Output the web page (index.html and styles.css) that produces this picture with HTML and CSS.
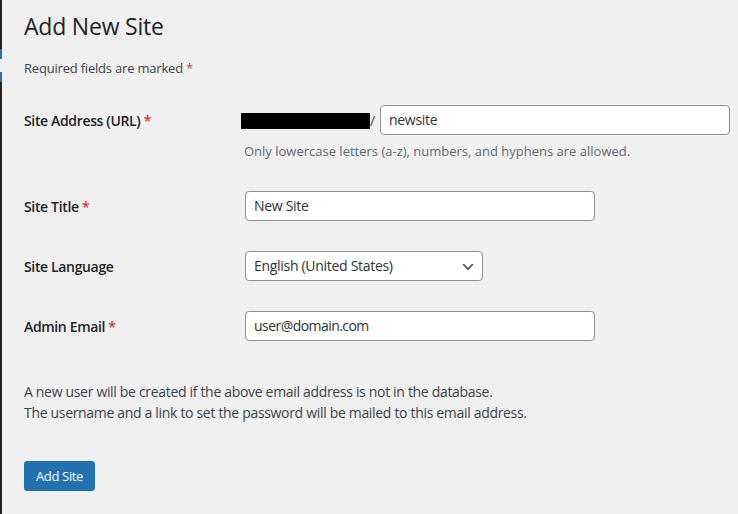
FILE: index.html
```html
<!DOCTYPE html>
<html lang="en">
<head>
<meta charset="utf-8">
<title>Add New Site</title>
<link rel="stylesheet" href="styles.css">
</head>
<body>
<div class="page">
  <div class="sidebar-edge">
    <div class="edge-dark edge-top"></div>
    <div class="edge-blue edge-b1"></div>
    <div class="edge-notch"></div>
    <div class="edge-blue edge-b2"></div>
    <div class="edge-dark edge-bottom"></div>
  </div>
  <main class="wrap">
    <h1 class="title">Add New Site</h1>
    <p class="required">Required fields are marked <span class="req">*</span></p>
    <div class="form">
      <div class="row">
        <div class="label">Site Address (URL) <span class="req">*</span></div>
        <div class="field">
          <div class="url-line">
            <span class="redacted"></span><span class="slash">/</span>
            <div class="input input-url">newsite</div>
          </div>
          <p class="desc">Only lowercase letters (a-z), numbers, and hyphens are allowed.</p>
        </div>
      </div>
      <div class="row">
        <div class="label">Site Title <span class="req">*</span></div>
        <div class="field">
          <div class="input input-reg">New Site</div>
        </div>
      </div>
      <div class="row">
        <div class="label">Site Language</div>
        <div class="field">
          <div class="select">
            <span>English (United States)</span>
            <svg class="chev" width="16" height="16" viewBox="0 0 20 20"><path d="M5 6l5 5 5-5 2 1-7 7-7-7 2-1z" fill="#50575e"/></svg>
          </div>
        </div>
      </div>
      <div class="row">
        <div class="label">Admin Email <span class="req">*</span></div>
        <div class="field">
          <div class="input input-reg input-email">user@domain.com</div>
        </div>
      </div>
    </div>
    <p class="note">A new user will be created if the above email address is not in the database.<br>The username and a link to set the password will be mailed to this email address.</p>
    <div class="actions"><button class="button" type="button">Add Site</button></div>
  </main>
</div>
</body>
</html>
```
FILE: styles.css
```css
html, body {
  margin: 0;
  padding: 0;
  background: #f0f0f1;
}
body {
  font-family: "Open Sans", "Noto Sans", sans-serif;
  color: #1d2327;
  width: 738px;
  height: 514px;
  overflow: hidden;
}
.page {
  display: flex;
  height: 514px;
}
.sidebar-edge {
  width: 2px;
  display: flex;
  flex-direction: column;
  flex-shrink: 0;
}
.edge-dark { background: #1d2327; }
.edge-top { height: 49px; }
.edge-blue { background: #2271b1; }
.edge-b1 { height: 10px; }
.edge-notch { height: 13px; background: #f0f0f1; }
.edge-b2 { height: 10px; }
.edge-bottom { flex: 1; }
.wrap {
  padding-left: 22px;
  flex: 1;
}
.title {
  margin: 11px 0 0;
  font-size: 23px;
  font-weight: 400;
  line-height: 30px;
  letter-spacing: -0.2px;
}
.required {
  margin: 17px 0 0;
  font-size: 13px;
  line-height: 20px;
  color: #3c434a;
  letter-spacing: -0.2px;
}
.req { color: #d63638; }
.form {
  margin-top: 27px;
  display: flex;
  flex-direction: column;
  gap: 30px;
}
.row {
  display: flex;
  align-items: flex-start;
}
.label {
  width: 221px;
  flex-shrink: 0;
  font-size: 14px;
  font-weight: 600;
  line-height: 28px;
  padding-top: 2px;
  letter-spacing: -0.35px;
}
.field { flex: 1; }
.url-line {
  display: flex;
  align-items: center;
}
.redacted {
  display: block;
  width: 129px;
  height: 16px;
  background: #000;
  margin-left: -4px;
  margin-top: 2px;
}
.slash {
  font-size: 14px;
  color: #3c434a;
  width: 10px;
  line-height: 20px;
  margin-top: 2px;
}
.input, .select {
  box-sizing: border-box;
  height: 30px;
  background: #fff;
  border: 1px solid #8c8f94;
  border-radius: 4px;
  font-size: 14px;
  line-height: 28px;
  padding: 0 8px;
  color: #2c3338;
  letter-spacing: -0.3px;
}
.input-url { width: 350px; }
.input-reg { width: 350px; }
.input-email { letter-spacing: -0.55px; }
.select {
  width: 238px;
  display: flex;
  align-items: center;
  justify-content: space-between;
  padding-right: 6px;
}
.chev { display: block; margin-top: 1px; }
.desc {
  margin: 6px 0 0 -1px;
  font-size: 13px;
  line-height: 20px;
  color: #646970;
  letter-spacing: 0;
}
.note {
  margin: 40px 0 0;
  font-size: 14px;
  line-height: 21px;
  color: #3c434a;
  letter-spacing: -0.32px;
}
.actions { margin-top: 38px; }
.button {
  display: block;
  height: 30px;
  padding: 0 11px;
  background: #2271b1;
  border: 1px solid #2271b1;
  border-radius: 3px;
  color: #fff;
  font-family: inherit;
  font-size: 13px;
  line-height: 28px;
  letter-spacing: -0.35px;
  cursor: pointer;
}
```
